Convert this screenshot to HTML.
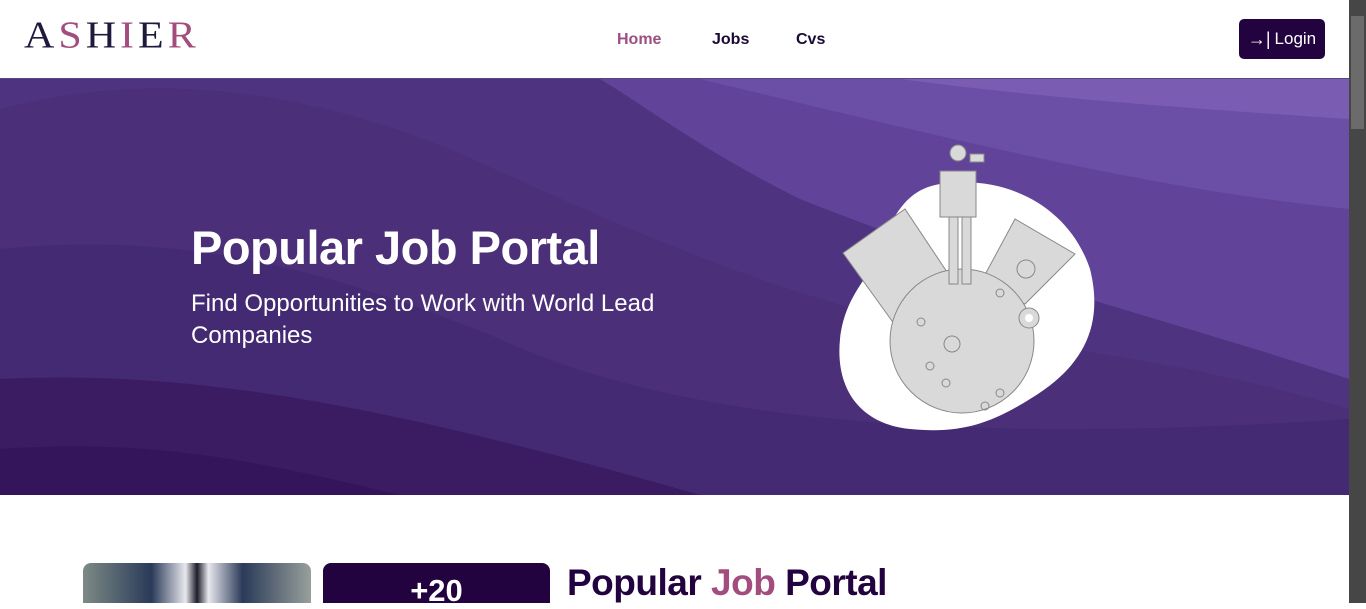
<!DOCTYPE html>
<html><head><meta charset="utf-8"><style>
*{margin:0;padding:0;box-sizing:border-box}
body{width:1366px;height:603px;overflow:hidden;font-family:"Liberation Sans",sans-serif;background:#fff;position:relative}
.nav{position:absolute;top:0;left:0;width:1349px;height:79px;background:#fff;border-bottom:1px solid #5a4480}
.logo{position:absolute;left:24px;top:18px;font-family:"Liberation Serif",serif;font-size:42px;letter-spacing:4px;color:#1e1a3c;line-height:40px;transform:scaleY(0.9);transform-origin:top left}
.logo .p{color:#a34d7e}
.menu{position:absolute;top:31px;font-size:16px;font-weight:bold;color:#1a0a33}
.login{position:absolute;left:1239px;top:19px;width:86px;height:40px;background:#22023f;border-radius:5px;color:#fff;font-size:17px;display:flex;align-items:center;justify-content:center;gap:4px}
.hero{position:absolute;top:79px;left:0;width:1349px;height:416px;overflow:hidden}
h1{position:absolute;left:191px;top:141px;color:#fff;font-size:47px;font-weight:bold;letter-spacing:-0.5px}
.sub{position:absolute;left:191px;top:209px;color:#fff;font-size:24px;line-height:32px;width:520px}
.sb{position:absolute;right:0;top:0;width:17px;height:603px;background:#464646}
.thumb{position:absolute;right:2px;top:16px;width:13px;height:113px;background:#6b6b6b}
</style></head><body>
<div class="nav">
<div class="logo">A<span class="p">S</span>H<span class="p">I</span>E<span class="p">R</span></div>
<div class="menu" style="left:617px;color:#9c4f80">Home</div>
<div class="menu" style="left:712px">Jobs</div>
<div class="menu" style="left:796px">Cvs</div>
<div class="login"><span style="font-size:18px">→|</span>Login</div>
</div>
<div class="hero">
<svg width="1349" height="416" viewBox="0 0 1349 416">
<rect width="1349" height="416" fill="#4e3480"/>
<path d="M600 0H1349V300C1200 250 1000 200 800 120C700 70 650 30 600 0Z" fill="#61449a"/>
<path d="M700 0H1349V130C1150 110 950 60 700 0Z" fill="#6b4ea6"/>
<path d="M900 0H1349V40C1200 30 1050 20 900 0Z" fill="#7a5db3"/>
<path d="M0 30C150 -10 300 10 450 70C650 160 800 230 1000 260C1150 280 1250 300 1349 330V416H0Z" fill="#4b2f78" opacity="0.9"/>
<path d="M0 170C200 150 350 200 500 260C650 330 900 370 1349 340V416H0Z" fill="#432a72"/>
<path d="M0 300C200 290 400 330 700 416H0Z" fill="#3b1b62"/>
<path d="M0 370C150 360 250 380 400 416H0Z" fill="#34145a"/>
<path d="M940 105C1010 95 1070 130 1090 190C1105 250 1080 290 1030 320C990 345 960 355 910 350C860 345 835 310 840 260C845 215 870 200 880 170C895 130 910 110 940 105Z" fill="#fff"/>
<path d="M843 174L905 130L955 205L905 260Z" fill="#d9d9d9" stroke="#888"/>
<path d="M980 205L1015 140L1075 175L1025 225Z" fill="#d9d9d9" stroke="#888"/>
<circle cx="1026" cy="190" r="9" fill="none" stroke="#888"/>
<circle cx="962" cy="262" r="72" fill="#d9d9d9" stroke="#888"/>
<path d="M949 130h9v75h-9zM962 130h9v75h-9z" fill="#d9d9d9" stroke="#888"/>
<path d="M940 92h36v46h-36z" fill="#d9d9d9" stroke="#888"/>
<path d="M970 75h14v8h-14z" fill="#d9d9d9" stroke="#888"/>
<circle cx="958" cy="74" r="8" fill="#d9d9d9" stroke="#888"/>
<circle cx="1029" cy="239" r="10" fill="#d9d9d9" stroke="#888"/><circle cx="1029" cy="239" r="4" fill="#fff"/>
<circle cx="952" cy="265" r="8" fill="none" stroke="#888"/>
<circle cx="921" cy="243" r="4" fill="none" stroke="#888"/>
<circle cx="930" cy="287" r="4" fill="none" stroke="#888"/>
<circle cx="946" cy="304" r="4" fill="none" stroke="#888"/>
<circle cx="1000" cy="314" r="4" fill="none" stroke="#888"/>
<circle cx="985" cy="327" r="4" fill="none" stroke="#888"/>
<circle cx="1000" cy="214" r="4" fill="none" stroke="#888"/>
</svg>
<h1>Popular Job Portal</h1>
<div class="sub">Find Opportunities to Work with World Lead Companies</div>
</div>
<div style="position:absolute;left:83px;top:563px;width:228px;height:40px;border-radius:8px 8px 0 0;background:linear-gradient(90deg,#7d8a86,#2a3a58 30%,#e8e8ee 45%,#1d1d2a 50%,#e8e8ee 55%,#2a3a58 70%,#98a09c)"></div>
<div style="position:absolute;left:323px;top:563px;width:227px;height:40px;border-radius:8px 8px 0 0;background:#22023f;color:#fff;font-weight:bold;font-size:31px;text-align:center;padding-top:10px">+20</div>
<div style="position:absolute;left:567px;top:562px;font-size:37px;font-weight:bold;color:#22023f;letter-spacing:-0.5px">Popular <span style="color:#a34d7e">Job</span> Portal</div>
<div class="sb"><div class="thumb"></div></div>
</body></html>
